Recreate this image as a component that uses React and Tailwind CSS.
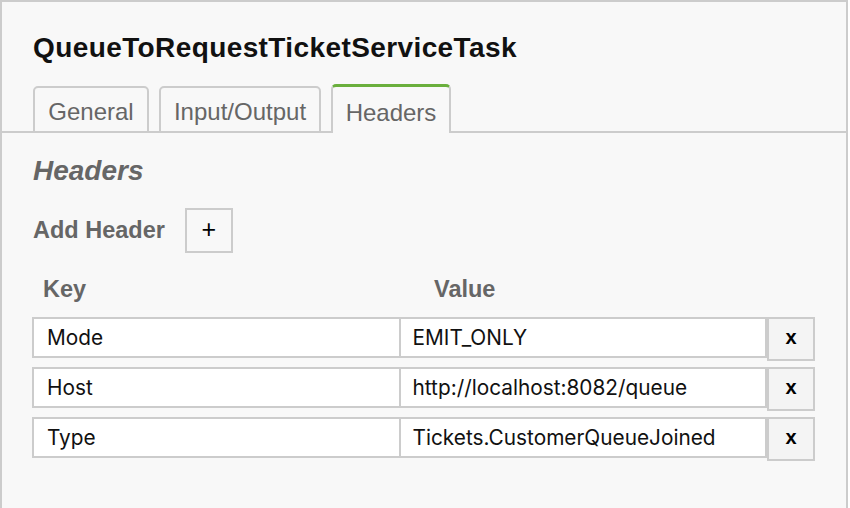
import { useState } from 'react';

const tabs = [
  { id: 'general', label: 'General', width: 'w-[116px]' },
  { id: 'io', label: 'Input/Output', width: 'w-[162px]' },
  { id: 'headers', label: 'Headers', width: 'w-[120px]' },
];

const initialHeaders = [
  { key: 'Mode', value: 'EMIT_ONLY' },
  { key: 'Host', value: 'http://localhost:8082/queue' },
  { key: 'Type', value: 'Tickets.CustomerQueueJoined' },
];

function HeaderRow({ row, onRemove }) {
  return (
    <div className="flex items-start">
      <div className="flex h-[41px] w-[369px] items-center border-2 border-[#cccccc] bg-white pl-[13px] text-[20.8px] text-[#111] font-['Inter',sans-serif]">
        {row.key}
      </div>
      <div className="flex h-[41px] w-[367px] items-center border-2 border-l-0 border-[#cccccc] bg-white pl-[12px] text-[20.8px] text-[#111] font-['Inter',sans-serif]">
        {row.value}
      </div>
      <button
        onClick={onRemove}
        className="flex h-[44px] w-[48px] items-center justify-center border-2 border-[#cccccc] bg-[#f4f4f4] pb-[4px] text-[20px] font-bold text-black"
      >
        x
      </button>
    </div>
  );
}

export default function App() {
  const [active, setActive] = useState('headers');
  const [headers, setHeaders] = useState(initialHeaders);

  return (
    <div className="h-[508px] w-[848px] overflow-hidden border-2 border-b-0 border-[#cccccc] bg-[#f8f8f8] font-['Liberation_Sans',Arial,sans-serif]">
      <div className="px-[31px] pt-[32px]">
        <h1 className="text-[28px] leading-[28px] font-bold tracking-[0.4px] text-[#111]">
          QueueToRequestTicketServiceTask
        </h1>
      </div>

      <div className="mt-[22px] flex items-end gap-[10px] border-b-2 border-[#cccccc] px-[31px]">
        {tabs.map((t) =>
          t.id === active ? (
            <button
              key={t.id}
              onClick={() => setActive(t.id)}
              className={`${t.width} -mb-[2px] h-[49px] rounded-t-[5px] border-2 border-t-[3px] border-b-0 border-[#cccccc] border-t-[#6aaf3d] bg-[#f8f8f8] pt-[6px] text-center text-[24px] leading-[24px] text-[#666]`}
            >
              <span className="block">{t.label}</span>
            </button>
          ) : (
            <button
              key={t.id}
              onClick={() => setActive(t.id)}
              className={`${t.width} -mb-[2px] h-[47px] rounded-t-[5px] border-2 border-[#cccccc] bg-[#f8f8f8] pt-[5px] text-center text-[24px] leading-[24px] text-[#666]`}
            >
              <span className="block">{t.label}</span>
            </button>
          )
        )}
      </div>

      <div className="px-[31px]">
        <h2 className="mt-[25px] text-[28px] leading-[26px] font-bold italic text-[#666]">
          Headers
        </h2>

        <div className="mt-[24px] flex items-center">
          <span className="text-[23.5px] leading-[23px] font-bold text-[#666]">Add Header</span>
          <button
            onClick={() => setHeaders([...headers, { key: '', value: '' }])}
            className="ml-[20px] flex h-[45px] w-[48px] items-center justify-center border-2 border-[#cccccc] bg-[#f8f8f8] pb-[2px] text-[25px] leading-none text-black"
          >
            +
          </button>
        </div>

        <div className="mt-[24px] flex text-[23.5px] leading-[24px] font-bold text-[#666]">
          <div className="w-[369px] pl-[10px]">Key</div>
          <div className="pl-[32px]">Value</div>
        </div>

        <div className="-ml-[1px] mt-[16px] flex flex-col gap-[6px]">
          {headers.map((row, i) => (
            <HeaderRow
              key={i}
              row={row}
              onRemove={() => setHeaders(headers.filter((_, j) => j !== i))}
            />
          ))}
        </div>
      </div>
    </div>
  );
}
